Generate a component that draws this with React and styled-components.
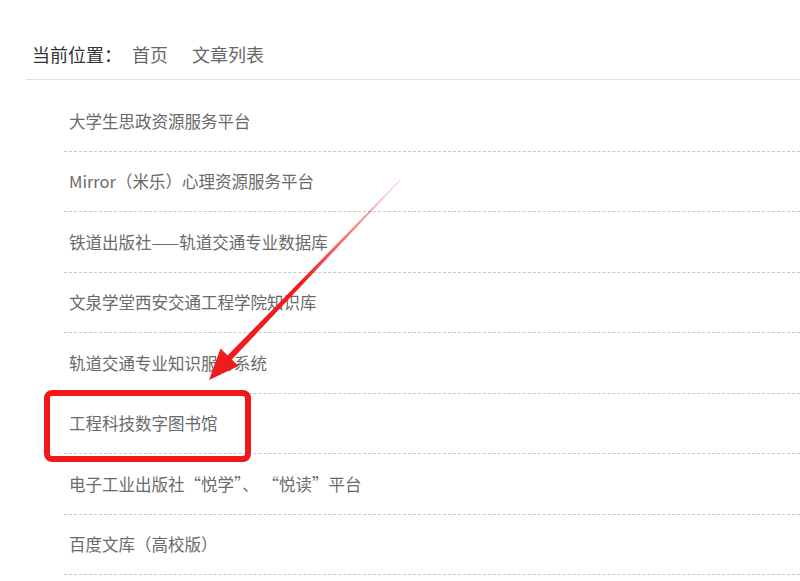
import React from 'react';
import styled, { createGlobalStyle } from 'styled-components';

const ITEMS = [
  { id: '0', title: '大学生思政资源服务平台' },
  { id: '1', title: 'Mirror（米乐）心理资源服务平台' },
  { id: '2', title: '铁道出版社——轨道交通专业数据库' },
  { id: '3', title: '文泉学堂西安交通工程学院知识库' },
  { id: '4', title: '轨道交通专业知识服务系统' },
  { id: '5', title: '工程科技数字图书馆' },
  { id: '6', title: '电子工业出版社“悦学”、 “悦读”平台' },
  { id: '7', title: '百度文库（高校版）' },
];

const GlobalStyle = createGlobalStyle`
  html, body {
    margin: 0;
    padding: 0;
    background: #fff;
  }
  body {
    font-family: "Microsoft YaHei", "Noto Sans CJK SC", "Liberation Sans", sans-serif;
    overflow: hidden;
  }
`;

const Page = styled.div`
  position: relative;
  width: 800px;
  height: 581px;
  overflow: hidden;
  padding-left: 26px;
  box-sizing: border-box;
`;

const Crumbs = styled.div`
  display: flex;
  align-items: flex-end;
  height: 80px;
  padding: 0 0 16px 6px;
  border-bottom: 1px solid #e2e2e2;
  font-size: 18px;
  line-height: 1;
  box-sizing: border-box;
`;

const CrumbLabel = styled.span`
  color: #333;
  margin-right: 10px;
`;

const CrumbLink = styled.a`
  color: #666;
  text-decoration: none;
  margin-right: 24px;
`;

const List = styled.ul`
  list-style: none;
  margin: 11px 0 0 38px;
  padding: 0;
`;

const Row = styled.li`
  height: 60.5px;
  box-sizing: border-box;
  border-bottom: 1px dashed #c8c8c8;
  display: flex;
  align-items: center;
  padding: 0 0 0 5px;
  font-size: 16.5px;
  color: #6a6a6a;
`;

const Overlay = styled.svg`
  position: absolute;
  left: 0;
  top: 0;
  pointer-events: none;
`;

const Arrow = () => (
  <Overlay width="800" height="581" viewBox="0 0 800 581">
    <defs>
      <linearGradient id="fade" x1="400" y1="180" x2="300" y2="285" gradientUnits="userSpaceOnUse">
        <stop offset="0" stopColor="#ee2222" stopOpacity="0.15" />
        <stop offset="1" stopColor="#ee1c1c" stopOpacity="1" />
      </linearGradient>
    </defs>
    <polygon points="400,179.5 400.6,180.4 231.6,359.8 227.2,355.8" fill="url(#fade)" />
    <polygon points="209,380 238.5,366 220.5,348.5" fill="#ee1c1c" />
    <rect x="47" y="393" width="201" height="66" rx="5" fill="none" stroke="#f01818" strokeWidth="6" />
  </Overlay>
);

const App = () => (
  <Page>
    <GlobalStyle />
    <Crumbs>
      <CrumbLabel>当前位置：</CrumbLabel>
      <CrumbLink href="#">首页</CrumbLink>
      <CrumbLink href="#">文章列表</CrumbLink>
    </Crumbs>
    <List>
      {ITEMS.map(item => (
        <Row key={item.id}>{item.title}</Row>
      ))}
    </List>
    <Arrow />
  </Page>
);

export default App;
